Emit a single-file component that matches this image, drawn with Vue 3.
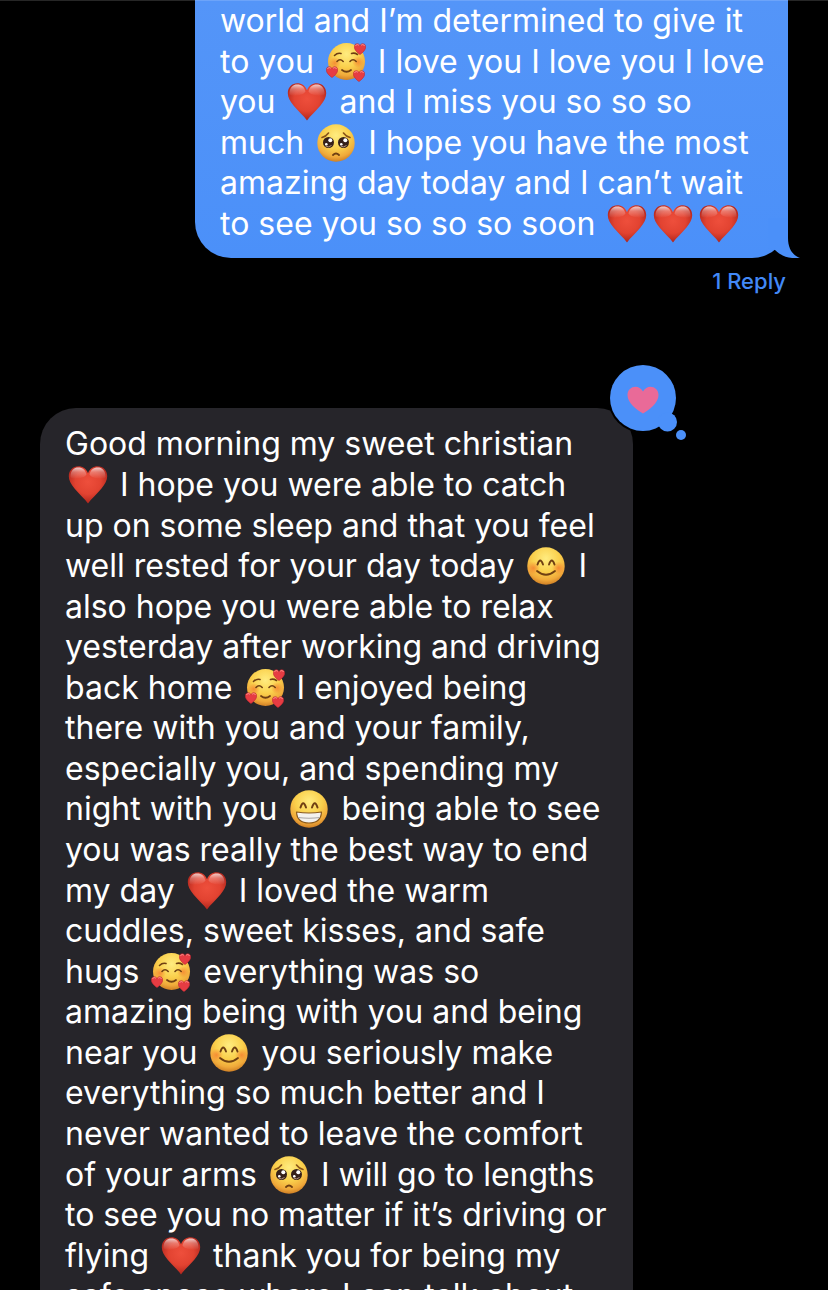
<script setup>
const sent = [
  'world and I’m determined to give it',
  'to you {love} I love you I love you I love',
  'you {heart} and I miss you so so so',
  'much {plead} I hope you have the most',
  'amazing day today and I can’t wait',
  'to see you so so so soon {heart}{heart}{heart}'
]

const received = [
  'Good morning my sweet christian',
  '{heart} I hope you were able to catch',
  'up on some sleep and that you feel',
  'well rested for your day today {smile} I',
  'also hope you were able to relax',
  'yesterday after working and driving',
  'back home {love} I enjoyed being',
  'there with you and your family,',
  'especially you, and spending my',
  'night with you {grin} being able to see',
  'you was really the best way to end',
  'my day {heart} I loved the warm',
  'cuddles, sweet kisses, and safe',
  'hugs {love} everything was so',
  'amazing being with you and being',
  'near you {smile} you seriously make',
  'everything so much better and I',
  'never wanted to leave the comfort',
  'of your arms {plead} I will go to lengths',
  'to see you no matter if it’s driving or',
  'flying {heart} thank you for being my',
  'safe space where I can talk about'
]

const names = {
  heart: 'red heart',
  love: 'smiling face with hearts',
  plead: 'pleading face',
  smile: 'smiling face with smiling eyes',
  grin: 'beaming face'
}

const split = (line) =>
  line.split(/(\{\w+\})/).filter(Boolean).map((part) =>
    part[0] === '{' ? { emoji: part.slice(1, -1) } : { text: part }
  )

const messages = [
  { kind: 'sent', lines: sent.map(split) },
  { kind: 'received', lines: received.map(split) }
]
</script>

<template>
  <main class="chat">
    <svg class="defs" aria-hidden="true">
      <defs>
        <radialGradient id="skin" cx=".5" cy=".3" r=".72">
          <stop offset="0" stop-color="#ffec80" />
          <stop offset=".5" stop-color="#fad04c" />
          <stop offset=".8" stop-color="#f0a93a" />
          <stop offset="1" stop-color="#cb7a22" />
        </radialGradient>
        <radialGradient id="blush">
          <stop offset="0" stop-color="#f4742c" stop-opacity=".7" />
          <stop offset="1" stop-color="#f4742c" stop-opacity="0" />
        </radialGradient>
        <radialGradient id="red" cx=".5" cy=".42" r=".6">
          <stop offset="0" stop-color="#ee4f3c" />
          <stop offset=".55" stop-color="#e24331" />
          <stop offset="1" stop-color="#ab231b" />
        </radialGradient>
        <linearGradient id="gloss" x1="0" y1="0" x2="0" y2="1">
          <stop offset="0" stop-color="#fff" stop-opacity=".75" />
          <stop offset=".4" stop-color="#fff" stop-opacity=".3" />
          <stop offset="1" stop-color="#fff" stop-opacity="0" />
        </linearGradient>
        <symbol id="mini" viewBox="0 0 12 12">
          <path d="M6 11.6C3.300 9.500.3 7 .3 3.900.3 0 4.800-.2 6 2.500 7.200-.2 11.700 0 11.700 3.900 11.700 7 8.700 9.500 6 11.600z" fill="#e63c43" stroke="#b92631" stroke-width=".5" />
          <path d="M1.500 3C2 1.300 4 1 5 2.500M7 2.500C8 1 10 1.300 10.500 3" fill="none" stroke="#ff9b94" stroke-width=".8" />
        </symbol>
        <symbol id="heart" viewBox="0 0 40 40">
          <path d="M20 38.500C17 34 11 29 6.500 23.500C3 19 .8 15.500.8 11.200C.8 5.200 5 1.300 10.300 1.300C14.700 1.300 18.300 3.800 20 8.200C21.700 3.800 25.300 1.300 29.700 1.300C35 1.300 39.200 5.200 39.200 11.200C39.200 15.500 37 19 33.500 23.500C29 29 23 34 20 38.500z" fill="url(#red)" />
          <path d="M2.500 12C2.500 5 6 2.500 10.300 2.500C14.500 2.500 17.500 5 18.500 9.500C17 13 4 16 2.500 12zM21.500 9.500C22.500 5 25.500 2.500 29.700 2.500C34 2.500 37.500 5 37.500 12C36 16 23 13 21.500 9.500z" fill="url(#gloss)" />
        </symbol>
        <symbol id="smile" viewBox="0 0 40 40">
          <circle cx="20" cy="20" r="18.700" fill="url(#skin)" />
          <circle cx="7.500" cy="22" r="6.500" fill="url(#blush)" />
          <circle cx="32.500" cy="22" r="6.500" fill="url(#blush)" />
          <path d="M11.500 18.500Q14.200 10.500 17 18.500M23 18.500Q25.800 10.500 28.500 18.500" fill="none" stroke="#6f3f12" stroke-width="1.900" stroke-linecap="round" />
          <path d="M11 25Q20 32.500 29 25" fill="none" stroke="#6f3f12" stroke-width="1.800" stroke-linecap="round" />
        </symbol>
        <symbol id="grin" viewBox="0 0 40 40">
          <circle cx="20" cy="20" r="18.700" fill="url(#skin)" />
          <path d="M11.500 18.500Q14.200 10 17 18.500M23 18.500Q25.800 10 28.500 18.500" fill="none" stroke="#6f3f12" stroke-width="2" stroke-linecap="round" />
          <path d="M7.500 23Q20 25 32.500 23Q32 34 20 34Q8 34 7.500 23z" fill="#f4f2ee" stroke="#8a5a1e" stroke-width="1.200" stroke-linejoin="round" />
          <path d="M9 28.500Q20 30 31 28.500" fill="none" stroke="#a9a6a4" stroke-width="1.200" />
        </symbol>
        <symbol id="plead" viewBox="0 0 40 40">
          <circle cx="20" cy="20" r="18.700" fill="url(#skin)" />
          <circle cx="12.500" cy="19.500" r="5.500" fill="#36201a" />
          <circle cx="27.500" cy="19.500" r="5.500" fill="#36201a" />
          <circle cx="14.300" cy="17.200" r="2" fill="#fff" />
          <circle cx="29.300" cy="17.200" r="2" fill="#fff" />
          <circle cx="10.300" cy="21.300" r="1.300" fill="#fff" />
          <circle cx="25.300" cy="21.300" r="1.300" fill="#fff" />
          <path d="M9.500 23Q12.500 25 15.500 22.500M24.500 23Q27.500 25 30.500 22.500" fill="none" stroke="#bfa08c" stroke-width=".9" />
          <path d="M6 14.500Q10 13.500 12.500 10M34 14.500Q30 13.500 27.500 10" fill="none" stroke="#8a5419" stroke-width="1.600" stroke-linecap="round" />
          <path d="M17 32Q20 29 23 32" fill="none" stroke="#6f3f12" stroke-width="1.800" stroke-linecap="round" />
        </symbol>
        <symbol id="love" viewBox="0 0 40 40">
          <circle cx="20.500" cy="19.500" r="18.500" fill="url(#skin)" />
          <circle cx="9" cy="21" r="6" fill="url(#blush)" />
          <circle cx="32" cy="20" r="6" fill="url(#blush)" />
          <path d="M11 19.500Q14 16 17.200 19.500M24 19.500Q27 16 30.200 19.500M8.500 13.500Q11.500 10.500 15 11.500M25.500 11.500Q28.500 10.500 31.500 12.500" fill="none" stroke="#6f3f12" stroke-width="1.600" stroke-linecap="round" />
          <path d="M16 28Q20.500 31.500 25 28" fill="none" stroke="#6f3f12" stroke-width="1.800" stroke-linecap="round" />
          <use href="#mini" x="28" y="1" width="12" height="12" />
          <use href="#mini" x="0" y="24" width="12" height="12" />
          <use href="#mini" x="27" y="28" width="12" height="12" />
        </symbol>
      </defs>
    </svg>

    <article v-for="message in messages" :key="message.kind" class="message" :class="message.kind">
      <div class="bubble">
        <p class="text">
          <span v-for="(line, i) in message.lines" :key="i" class="line"><template v-for="(part, j) in line" :key="j"><svg v-if="part.emoji" class="emoji" role="img" :aria-label="names[part.emoji]"><use :href="'#' + part.emoji" /></svg><template v-else>{{ part.text }}</template></template></span>
        </p>
        <svg v-if="message.kind === 'sent'" class="tail" viewBox="0 0 32 40" aria-hidden="true">
          <path d="M0 0H20V20C20 30 24 37 32 40C21 41 13 38 7 32L0 30z" />
        </svg>
        <svg v-else class="tapback" viewBox="0 0 84 84" role="img" aria-label="Loved">
          <g class="ring">
            <circle cx="37" cy="37" r="35" />
            <circle cx="62" cy="61" r="11" />
          </g>
          <circle cx="37" cy="37" r="33" />
          <circle cx="61.500" cy="61" r="9.500" />
          <circle cx="75" cy="74" r="5" />
          <path class="love" d="M37 52.500C31 49 21.500 42 21.500 34C21.500 25 33 22.500 37 30.500C41 22.500 52.500 25 52.500 34C52.500 42 43 49 37 52.500z" />
        </svg>
      </div>
      <button v-if="message.kind === 'sent'" class="reply" type="button">1 Reply</button>
    </article>
  </main>
</template>

<style>
body {
  margin: 0;
  background: #000;
}
</style>

<style scoped>
.chat {
  box-sizing: border-box;
  height: 100vh;
  overflow: hidden;
  background: #000;
  color: #fff;
  font-family: Inter, "Noto Sans", sans-serif;
  position: relative;
}
.chat::after {
  content: "";
  position: absolute;
  inset: 0 0 auto;
  height: 1px;
  background: rgba(255, 255, 255, 0.15);
}
.defs {
  position: absolute;
  width: 0;
  height: 0;
}
.message {
  display: flex;
  flex-direction: column;
}
.sent {
  margin: 0 40px 113px 195px;
}
.received {
  margin: 0 195px 0 40px;
}
.bubble {
  position: relative;
  padding: 16px 25px;
}
.sent .bubble {
  padding-top: 1px;
  padding-bottom: 14px;
  border-radius: 0 0 36px 36px;
  background: linear-gradient(#5495f8, #4b90f9);
}
.received .bubble {
  border-radius: 36px;
  background: #26252a;
}
.text {
  margin: 0;
  font-size: 32px;
  line-height: 1.268;
}
.line {
  display: block;
  white-space: nowrap;
}
.emoji {
  display: inline-block;
  width: 40px;
  height: 40px;
  margin: -9px 3px;
  vertical-align: baseline;
}
.tail {
  position: absolute;
  right: -12px;
  bottom: 0;
  width: 32px;
  height: 40px;
  fill: #4b90f9;
}
.tapback {
  position: absolute;
  top: -47px;
  right: -57px;
  width: 84px;
  height: 84px;
  fill: #4b90f9;
}
.ring {
  fill: #000;
}
.love {
  fill: #e96a98;
}
.reply {
  align-self: flex-end;
  margin-top: 9px;
  padding: 0 2px;
  border: 0;
  background: none;
  color: #4289f7;
  font: 500 22px/28px Inter, "Noto Sans", sans-serif;
}
</style>
